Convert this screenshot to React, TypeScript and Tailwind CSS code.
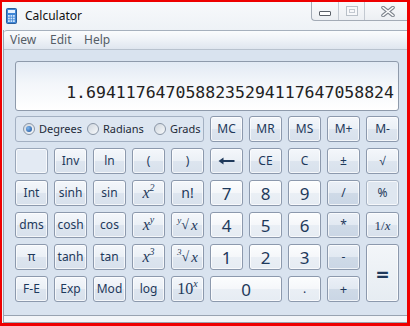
import React from "react";

type Variant = "fn" | "num" | "op" | "flat" | "blank" | "eq";

const skin: Record<Variant, string> = {
  fn: "border-[#8c99ad] bg-[linear-gradient(to_bottom,#f4f7fb_0%,#ebf0f6_48%,#dde5ef_52%,#d8e1ec_100%)]",
  num: "border-[#8c99ad] bg-[linear-gradient(to_bottom,#fcfdfe_0%,#f5f7fa_48%,#eaeff5_52%,#e6ecf3_100%)]",
  op: "border-[#8c99ad] bg-[linear-gradient(to_bottom,#ebf0f7_0%,#e2e9f2_48%,#cfdae7_52%,#cad6e5_100%)]",
  flat: "border-[#a8b4c4] bg-[#dfe7f0]",
  blank: "border-[#9aa7b9] bg-[#e3eaf3]",
  eq: "border-[#8c99ad] bg-[linear-gradient(to_bottom,#f3f6f9_0%,#e6ecf2_100%)]",
};

function Key({
  children,
  v = "fn",
  className = "",
}: {
  children?: React.ReactNode;
  v?: Variant;
  className?: string;
}) {
  return (
    <button
      className={`flex items-center justify-center rounded-[3px] border text-[#1e395b] text-[12px] leading-none shadow-[inset_0_0_0_1px_rgba(255,255,255,0.7)] ${skin[v]} ${className}`}
    >
      {children}
    </button>
  );
}

const serif = "font-['Liberation_Serif',serif]";

function Pow({ base, exp, italicBase = true }: { base: string; exp: string; italicBase?: boolean }) {
  return (
    <span className={`${serif} text-[16px]`}>
      {italicBase ? <i>{base}</i> : base}
      <sup className="text-[10px] italic top-[-0.7em]">{exp}</sup>
    </span>
  );
}

function Root({ idx }: { idx: string }) {
  return (
    <span className={`${serif} text-[15px] flex items-center`}>
      <sup className="text-[9px] italic top-[-0.6em]">{idx}</sup>
      <span className="text-[14px]">√</span>
      <i className="ml-[2px]">x</i>
    </span>
  );
}

function Radio({ label, checked = false, w }: { label: string; checked?: boolean; w: string }) {
  return (
    <div className={`flex items-center gap-[4px] ${w}`}>
      <span className="flex h-[12px] w-[12px] items-center justify-center rounded-full border border-[#8a96a6] bg-[linear-gradient(to_bottom_right,#cfd6de,#f7f9fb)]">
        {checked && (
          <span className="h-[6px] w-[6px] rounded-full bg-[radial-gradient(circle_at_35%_35%,#7fb7ee,#1a4f98)]" />
        )}
      </span>
      <span className="text-[11px] text-[#1e2a38]">{label}</span>
    </div>
  );
}

function CalcIcon() {
  return (
    <svg width="11" height="16" viewBox="0 0 11 16">
      <rect x="0.5" y="0.5" width="10" height="15" rx="1" fill="#3f86d6" stroke="#2a5f9e" />
      <rect x="2" y="2" width="7" height="3" fill="#e6f2ff" />
      {[0, 1, 2].map((c) =>
        [0, 1, 2].map((r) => (
          <rect key={`${c}-${r}`} x={2 + c * 2.5} y={7 + r * 2.6} width="1.8" height="1.8" fill="#cfe4fb" />
        ))
      )}
    </svg>
  );
}

export default function App() {
  return (
    <div className="h-[326px] w-[410px] border-l-2 border-t-2 border-r-[3px] border-b-[3px] border-[#ee0000] bg-[#f3f5f8] font-['Noto_Sans',sans-serif] overflow-hidden">
      <div className="flex h-full flex-col">
        {/* title bar */}
        <div className="flex h-[28px] shrink-0 items-start bg-[linear-gradient(to_bottom,#f7f9fb,#eef2f6)]">
          <div className="flex items-center pl-[4px] pt-[5px]">
            <CalcIcon />
            <span className="ml-[8px] text-[12px] text-[#111]">Calculator</span>
          </div>
          <div className="ml-auto flex h-[19px] rounded-bl-[4px] border-b border-l border-[#a3abb6] bg-[linear-gradient(to_bottom,#f9fafc,#eceff3)]">
            <div className="flex w-[27px] items-center justify-center border-r border-[#c3c9d1] pt-[4px]">
              <span className="h-[5px] w-[12px] rounded-[1px] border border-[#5a6068] bg-white" />
            </div>
            <div className="flex w-[26px] items-center justify-center border-r border-[#c3c9d1]">
              <span className="flex h-[10px] w-[12px] items-center justify-center border border-[#b9c0c8] bg-[#f7f8fa]">
                <span className="h-[4px] w-[6px] border border-[#c3c9d1]" />
              </span>
            </div>
            <div className="flex w-[42px] items-center justify-center pl-[4px]">
              <svg width="14" height="11" viewBox="0 0 14 11">
                <path d="M2 1.5 L12 9.5 M12 1.5 L2 9.5" stroke="#7e858e" strokeWidth="3.6" strokeLinecap="round" />
                <path d="M2 1.5 L12 9.5 M12 1.5 L2 9.5" stroke="#ffffff" strokeWidth="1.6" strokeLinecap="round" />
              </svg>
            </div>
          </div>
        </div>

        {/* client area */}
        <div className="ml-px flex flex-1 flex-col border-l border-[#98a3b1]">
          {/* menu */}
          <div className="flex h-[20px] items-center rounded-tl-[3px] border-t border-b border-t-[#a6b0bd] border-b-[#b8c2ce] bg-[linear-gradient(to_bottom,#fbfcfd,#eef2f7_50%,#dfe6ef)] pl-[6px] text-[12px] text-[#555d66]">
            <span className="w-[40px]">View</span>
            <span className="w-[34px]">Edit</span>
            <span>Help</span>
          </div>

          {/* panel */}
          <div className="border-b border-[#98a3b1] bg-[#d9e3ef] pl-[11px] pt-[11px] pb-[13px]">
            <div className="mb-[5px] flex h-[50px] w-[384px] items-end justify-end rounded-[3px] border border-[#8e9aab] bg-[linear-gradient(to_bottom,#e2eaf4_0%,#f3f6fa_45%,#ffffff_100%)] pb-[8px] pr-[4px]">
              <span className="font-['DejaVu_Sans_Mono',monospace] text-[16.5px] leading-[18px] text-[#222]">
                1.6941176470588235294117647058824
              </span>
            </div>

            <div className="grid w-[384px] grid-cols-[repeat(10,33px)] grid-rows-[repeat(6,26px)] gap-[6px]">
              <div className="col-span-5 flex items-center rounded-[3px] border border-[#a3b0c2] bg-[#dde6f1] pl-[7px]">
                <Radio label="Degrees" checked w="w-[64px]" />
                <Radio label="Radians" w="w-[67px]" />
                <Radio label="Grads" w="" />
              </div>
              <Key>MC</Key>
              <Key>MR</Key>
              <Key>MS</Key>
              <Key>M+</Key>
              <Key>M-</Key>

              <Key v="blank" />
              <Key>Inv</Key>
              <Key>ln</Key>
              <Key>(</Key>
              <Key>)</Key>
              <Key>
                <svg width="17" height="8" viewBox="0 0 17 8">
                  <path d="M0.5 4 L5.5 0.5 L5.5 3 L16.5 3 L16.5 5 L5.5 5 L5.5 7.5 Z" fill="#1e395b" />
                </svg>
              </Key>
              <Key>CE</Key>
              <Key>C</Key>
              <Key className="text-[11px]">±</Key>
              <Key className="text-[11px]">√</Key>

              <Key>Int</Key>
              <Key>sinh</Key>
              <Key>sin</Key>
              <Key><Pow base="x" exp="2" /></Key>
              <Key className="text-[14px]">n!</Key>
              <Key v="num" className="text-[17px]">7</Key>
              <Key v="num" className="text-[17px]">8</Key>
              <Key v="num" className="text-[17px]">9</Key>
              <Key v="op" className="text-[11px]">/</Key>
              <Key v="flat" className="text-[12px]">%</Key>

              <Key>dms</Key>
              <Key>cosh</Key>
              <Key>cos</Key>
              <Key><Pow base="x" exp="y" /></Key>
              <Key><Root idx="y" /></Key>
              <Key v="num" className="text-[17px]">4</Key>
              <Key v="num" className="text-[17px]">5</Key>
              <Key v="num" className="text-[17px]">6</Key>
              <Key v="op" className="text-[11px]">*</Key>
              <Key>
                <span className={`${serif} text-[13px]`}>
                  1/<i>x</i>
                </span>
              </Key>

              <Key>π</Key>
              <Key>tanh</Key>
              <Key>tan</Key>
              <Key><Pow base="x" exp="3" /></Key>
              <Key><Root idx="3" /></Key>
              <Key v="num" className="text-[17px]">1</Key>
              <Key v="num" className="text-[17px]">2</Key>
              <Key v="num" className="text-[17px]">3</Key>
              <Key v="op" className="text-[12px]">-</Key>
              <Key v="eq" className="row-span-2 text-[22px] font-bold">=</Key>

              <Key>F-E</Key>
              <Key>Exp</Key>
              <Key>Mod</Key>
              <Key>log</Key>
              <Key><Pow base="10" exp="x" italicBase={false} /></Key>
              <Key v="num" className="col-span-2 text-[17px]">0</Key>
              <Key v="num" className="text-[12px]">.</Key>
              <Key v="op" className="text-[13px]">+</Key>
            </div>
          </div>
          <div className="flex-1" />
          <div className="h-px bg-[#9aa3ae]" />
        </div>
      </div>
    </div>
  );
}
